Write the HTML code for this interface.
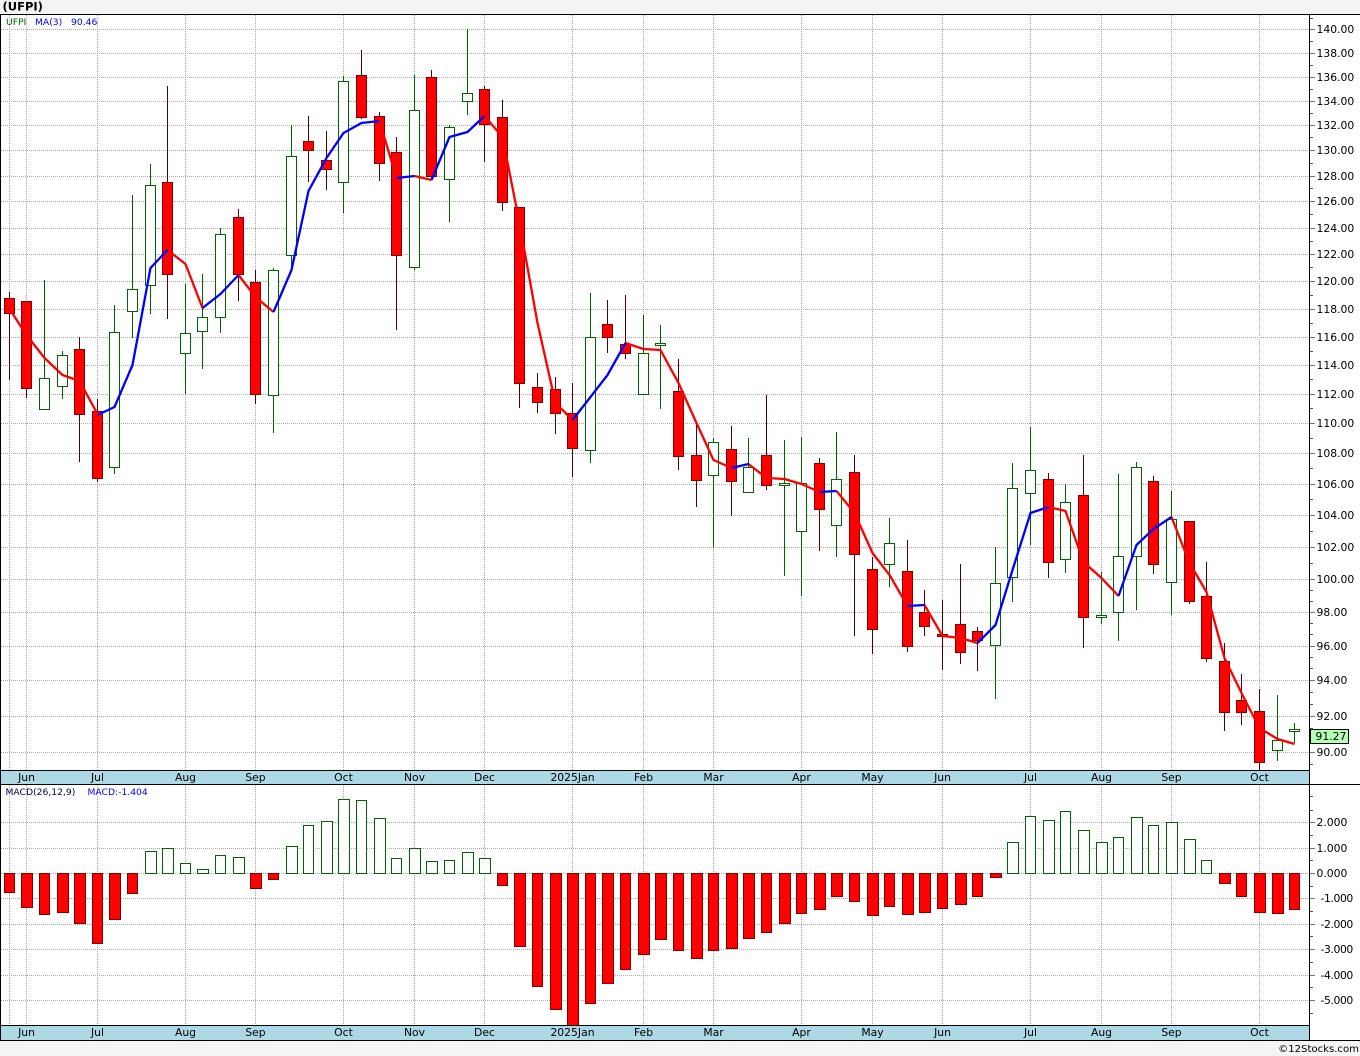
<!DOCTYPE html>
<html lang="en">
<head>
<meta charset="utf-8">
<title>UFPI</title>
<style>
html,body{margin:0;padding:0;background:#f4f4f4;}
body{width:1360px;height:1056px;overflow:hidden;}
svg{display:block;}
text{font-family:"DejaVu Sans","Liberation Sans",sans-serif;font-size:10.8px;fill:#000;}
.m{text-anchor:middle;}
.s{font-size:9.2px;}
</style>
</head>
<body>
<svg width="1360" height="1056" viewBox="0 0 1360 1056" xmlns="http://www.w3.org/2000/svg">
<rect x="0" y="0" width="1360" height="1056" fill="#f4f4f4"/>
<rect x="0" y="14" width="1360" height="1027" fill="#fff"/>

<!-- grid -->
<g fill="none" stroke="#aaa" stroke-width="1" stroke-dasharray="1 1" shape-rendering="crispEdges">
<path d="M1 29.5H1309M1 53.5H1309M1 77.5H1309M1 101.5H1309M1 125.5H1309M1 150.5H1309M1 176.5H1309M1 201.5H1309M1 228.5H1309M1 254.5H1309M1 281.5H1309M1 309.5H1309M1 337.5H1309M1 365.5H1309M1 394.5H1309M1 423.5H1309M1 453.5H1309M1 484.5H1309M1 515.5H1309M1 547.5H1309M1 579.5H1309M1 612.5H1309M1 646.5H1309M1 680.5H1309M1 716.5H1309M1 752.5H1309"/>
<path d="M1 822.5H1309M1 848.5H1309M1 873.5H1309M1 898.5H1309M1 924.5H1309M1 949.5H1309M1 975.5H1309M1 1000.5H1309"/>
<path d="M9.5 15V770M26.5 15V770M97.5 15V770M185.5 15V770M255.5 15V770M343.5 15V770M414.5 15V770M484.5 15V770M572.5 15V770M643.5 15V770M713.5 15V770M801.5 15V770M872.5 15V770M942.5 15V770M1030.5 15V770M1101.5 15V770M1171.5 15V770M1259.5 15V770"/>
<path d="M9.5 785V1025M26.5 785V1025M97.5 785V1025M185.5 785V1025M255.5 785V1025M343.5 785V1025M414.5 785V1025M484.5 785V1025M572.5 785V1025M643.5 785V1025M713.5 785V1025M801.5 785V1025M872.5 785V1025M942.5 785V1025M1030.5 785V1025M1101.5 785V1025M1171.5 785V1025M1259.5 785V1025"/>
</g>

<!-- wicks -->
<path fill="none" stroke="#006400" stroke-width="1" shape-rendering="crispEdges" d="M44.5 280V410M62.5 351V399M114.5 305V474M132.5 195V338M150.5 164V314M185.5 284V394M202.5 274V369M220.5 228V333M273.5 268V433M291.5 125V268M343.5 76V213M414.5 75V270M449.5 125V222M467.5 29V115M590.5 293V463M643.5 315V394M660.5 325V409M713.5 438V548M748.5 438V493M784.5 440V576M801.5 437V596M836.5 432V557M889.5 518V587M995.5 547V699M1012.5 463V602M1030.5 427V545M1065.5 484V573M1101.5 572V624M1118.5 474V641M1136.5 462V610M1171.5 491V615M1277.5 695V761M1294.5 723V743"/>
<path fill="none" stroke="#550000" stroke-width="1" shape-rendering="crispEdges" d="M9.5 292V380M26.5 301V398M79.5 337V462M97.5 399V482M167.5 86V319M238.5 209V301M255.5 270V404M308.5 116V182M326.5 131V190M361.5 50V119M379.5 112V181M396.5 137V330M431.5 70V178M484.5 86V162M502.5 100V211M519.5 207V408M537.5 373V413M555.5 377V434M572.5 383V477M607.5 300V353M625.5 295V359M678.5 359V470M696.5 423V507M731.5 426V516M766.5 395V490M819.5 458V551M854.5 455V636M872.5 557V654M907.5 540V652M924.5 590V636M942.5 600V670M960.5 564V664M977.5 627V671M1048.5 473V578M1083.5 455V648M1153.5 476V574M1189.5 521V604M1206.5 562V662M1224.5 643V731M1241.5 674V725M1259.5 689V770"/>

<!-- bodies -->
<path fill="#fff" stroke="#006400" stroke-width="1" shape-rendering="crispEdges" d="M39.5 378.5h10v31h-10zM57.5 355.5h10v31h-10zM109.5 332.5h10v135h-10zM127.5 289.5h10v22h-10zM145.5 185.5h10v100h-10zM180.5 333.5h10v20h-10zM197.5 317.5h10v14h-10zM215.5 234.5h10v83h-10zM268.5 270.5h10v125h-10zM286.5 156.5h10v99h-10zM338.5 81.5h10v101h-10zM409.5 110.5h10v157h-10zM444.5 127.5h10v52h-10zM462.5 93.5h10v8h-10zM585.5 337.5h10v113h-10zM638.5 353.5h10v41h-10zM655.5 343.5h10v2h-10zM708.5 442.5h10v33h-10zM743.5 467.5h10v25h-10zM779.5 483.5h10v2h-10zM796.5 483.5h10v48h-10zM831.5 479.5h10v46h-10zM884.5 543.5h10v21h-10zM990.5 583.5h10v62h-10zM1007.5 488.5h10v89h-10zM1025.5 470.5h10v23h-10zM1060.5 502.5h10v57h-10zM1096.5 615.5h10v2h-10zM1113.5 556.5h10v56h-10zM1131.5 467.5h10v89h-10zM1166.5 519.5h10v63h-10zM1272.5 740.5h10v10h-10zM1289.5 729.5h10v2h-10z"/>
<path fill="#f00" stroke="#800000" stroke-width="1" shape-rendering="crispEdges" d="M4.5 298.5h10v15h-10zM21.5 301.5h10v87h-10zM74.5 349.5h10v65h-10zM92.5 411.5h10v67h-10zM162.5 182.5h10v92h-10zM233.5 217.5h10v57h-10zM250.5 282.5h10v112h-10zM303.5 141.5h10v9h-10zM321.5 160.5h10v9h-10zM356.5 75.5h10v42h-10zM374.5 116.5h10v47h-10zM391.5 152.5h10v103h-10zM426.5 77.5h10v99h-10zM479.5 89.5h10v35h-10zM497.5 117.5h10v85h-10zM514.5 207.5h10v176h-10zM532.5 387.5h10v15h-10zM550.5 389.5h10v24h-10zM567.5 413.5h10v35h-10zM602.5 324.5h10v13h-10zM620.5 344.5h10v9h-10zM673.5 391.5h10v65h-10zM691.5 455.5h10v25h-10zM726.5 449.5h10v32h-10zM761.5 455.5h10v30h-10zM814.5 463.5h10v46h-10zM849.5 472.5h10v82h-10zM867.5 569.5h10v60h-10zM902.5 571.5h10v75h-10zM919.5 612.5h10v14h-10zM937.5 634.5h10v2h-10zM955.5 624.5h10v28h-10zM972.5 631.5h10v9h-10zM1043.5 479.5h10v83h-10zM1078.5 495.5h10v122h-10zM1148.5 481.5h10v83h-10zM1184.5 521.5h10v80h-10zM1201.5 596.5h10v62h-10zM1219.5 661.5h10v51h-10zM1236.5 700.5h10v12h-10zM1254.5 711.5h10v51h-10z"/>

<!-- moving average -->
<g fill="none" stroke-width="2.3" stroke-linejoin="round">
<g stroke="#f00">
<polyline points="9.5,309 26.5,335 44.5,358 62.5,375 79.5,381 97.5,414"/>
<polyline points="167.5,250 185.5,264 202.5,308"/>
<polyline points="238.5,275 255.5,297 273.5,312"/>
<polyline points="379.5,121 396.5,178"/>
<polyline points="414.5,176 431.5,180"/>
<polyline points="484.5,116 502.5,137 519.5,223 537.5,323 555.5,403 572.5,420"/>
<polyline points="625.5,343 643.5,349 660.5,350 678.5,383 696.5,423 713.5,460 731.5,468"/>
<polyline points="748.5,464 766.5,478 784.5,479 801.5,484 819.5,492"/>
<polyline points="836.5,491 854.5,513 872.5,553 889.5,575 907.5,606"/>
<polyline points="924.5,605 942.5,636 960.5,638 977.5,643"/>
<polyline points="1048.5,507 1065.5,511 1083.5,562 1101.5,578 1118.5,596"/>
<polyline points="1171.5,517 1189.5,563 1206.5,592 1224.5,658 1241.5,693 1259.5,728 1277.5,739 1294.5,744"/>
</g>
<g stroke="#00f">
<polyline points="97.5,415 114.5,407 132.5,365 150.5,268 167.5,250"/>
<polyline points="202.5,308 220.5,294 238.5,275"/>
<polyline points="273.5,312 291.5,270 308.5,191 326.5,158 343.5,133 361.5,123 379.5,121"/>
<polyline points="396.5,178 414.5,176"/>
<polyline points="431.5,180 449.5,137 467.5,132 484.5,116"/>
<polyline points="572.5,420 590.5,397 607.5,375 625.5,343"/>
<polyline points="731.5,468 748.5,464"/>
<polyline points="819.5,492 836.5,491"/>
<polyline points="907.5,606 924.5,605"/>
<polyline points="977.5,643 995.5,625 1012.5,570 1030.5,513 1048.5,507"/>
<polyline points="1118.5,596 1136.5,545 1153.5,529 1171.5,517"/>
</g>
</g>

<!-- MACD bars -->
<path fill="#f00" stroke="#800000" stroke-width="1" shape-rendering="crispEdges" d="M4.5 873.5h10V892.5h-10zM21.5 873.5h11V907.5h-11zM39.5 873.5h10V914.5h-10zM57.5 873.5h11V912.5h-11zM74.5 873.5h11V923.5h-11zM92.5 873.5h10V943.5h-10zM109.5 873.5h11V919.5h-11zM127.5 873.5h10V893.5h-10zM250.5 873.5h11V888.5h-11zM268.5 873.5h10V879.5h-10zM497.5 873.5h10V885.5h-10zM514.5 873.5h11V946.5h-11zM532.5 873.5h10V986.5h-10zM550.5 873.5h11V1009.5h-11zM567.5 873.5h11V1025.5h-11zM585.5 873.5h10V1003.5h-10zM602.5 873.5h11V983.5h-11zM620.5 873.5h10V969.5h-10zM638.5 873.5h11V954.5h-11zM655.5 873.5h11V939.5h-11zM673.5 873.5h10V950.5h-10zM691.5 873.5h11V958.5h-11zM708.5 873.5h10V950.5h-10zM726.5 873.5h11V948.5h-11zM743.5 873.5h11V938.5h-11zM761.5 873.5h10V932.5h-10zM779.5 873.5h11V923.5h-11zM796.5 873.5h10V913.5h-10zM814.5 873.5h11V909.5h-11zM831.5 873.5h11V896.5h-11zM849.5 873.5h10V901.5h-10zM867.5 873.5h11V915.5h-11zM884.5 873.5h10V906.5h-10zM902.5 873.5h11V914.5h-11zM919.5 873.5h11V912.5h-11zM937.5 873.5h10V908.5h-10zM955.5 873.5h11V904.5h-11zM972.5 873.5h10V896.5h-10zM990.5 873.5h11V877.5h-11zM1219.5 873.5h11V883.5h-11zM1236.5 873.5h10V896.5h-10zM1254.5 873.5h11V912.5h-11zM1272.5 873.5h11V913.5h-11zM1289.5 873.5h10V909.5h-10z"/>
<path fill="#fff" stroke="#006400" stroke-width="1" shape-rendering="crispEdges" d="M145.5 851.5h11V873.5h-11zM162.5 848.5h11V873.5h-11zM180.5 863.5h10V873.5h-10zM197.5 869.5h11V873.5h-11zM215.5 855.5h10V873.5h-10zM233.5 857.5h11V873.5h-11zM286.5 846.5h11V873.5h-11zM303.5 825.5h10V873.5h-10zM321.5 821.5h11V873.5h-11zM338.5 799.5h11V873.5h-11zM356.5 800.5h10V873.5h-10zM374.5 818.5h11V873.5h-11zM391.5 858.5h10V873.5h-10zM409.5 848.5h11V873.5h-11zM426.5 861.5h11V873.5h-11zM444.5 860.5h10V873.5h-10zM462.5 852.5h11V873.5h-11zM479.5 858.5h11V873.5h-11zM1007.5 842.5h11V873.5h-11zM1025.5 816.5h10V873.5h-10zM1043.5 820.5h11V873.5h-11zM1060.5 811.5h10V873.5h-10zM1078.5 830.5h11V873.5h-11zM1096.5 842.5h11V873.5h-11zM1113.5 837.5h10V873.5h-10zM1131.5 817.5h11V873.5h-11zM1148.5 825.5h10V873.5h-10zM1166.5 822.5h11V873.5h-11zM1184.5 839.5h11V873.5h-11zM1201.5 860.5h10V873.5h-10z"/>

<!-- date strips -->
<rect x="1" y="770" width="1308" height="15" fill="#add8e6"/>
<rect x="1" y="1025" width="1308" height="16" fill="#add8e6"/>

<!-- axis ticks -->
<path fill="none" stroke="#777" stroke-width="1" shape-rendering="crispEdges" d="M1309 29.5h6M1309 53.5h6M1309 77.5h6M1309 101.5h6M1309 125.5h6M1309 150.5h6M1309 176.5h6M1309 201.5h6M1309 228.5h6M1309 254.5h6M1309 281.5h6M1309 309.5h6M1309 337.5h6M1309 365.5h6M1309 394.5h6M1309 423.5h6M1309 453.5h6M1309 484.5h6M1309 515.5h6M1309 547.5h6M1309 579.5h6M1309 612.5h6M1309 646.5h6M1309 680.5h6M1309 716.5h6M1309 752.5h6M1309 822.5h6M1309 848.5h6M1309 873.5h6M1309 898.5h6M1309 924.5h6M1309 949.5h6M1309 975.5h6M1309 1000.5h6"/>
<path fill="none" stroke="#555" stroke-width="1" shape-rendering="crispEdges" d="M1309 18.5h4M1309 41.5h4M1309 65.5h4M1309 89.5h4M1309 113.5h4M1309 137.5h4M1309 163.5h4M1309 188.5h4M1309 214.5h4M1309 241.5h4M1309 267.5h4M1309 295.5h4M1309 323.5h4M1309 351.5h4M1309 379.5h4M1309 408.5h4M1309 438.5h4M1309 468.5h4M1309 499.5h4M1309 531.5h4M1309 563.5h4M1309 590.5h4M1309 601.5h4M1309 623.5h4M1309 634.5h4M1309 657.5h4M1309 668.5h4M1309 692.5h4M1309 704.5h4M1309 728.5h4M1309 740.5h4M1309 764.5h4M1309 796.5h4M1309 810.5h4M1309 835.5h4M1309 860.5h4M1309 886.5h4M1309 911.5h4M1309 936.5h4M1309 962.5h4M1309 987.5h4M1309 1013.5h4"/>

<!-- frame -->
<g fill="#000" shape-rendering="crispEdges">
<rect x="0" y="14" width="1360" height="1"/>
<rect x="0" y="14" width="1" height="1027"/>
<rect x="1309" y="14" width="1" height="1027"/>
<rect x="0" y="770" width="1309" height="1"/>
<rect x="0" y="784" width="1360" height="1"/>
<rect x="0" y="1025" width="1309" height="1"/>
<rect x="0" y="1040" width="1360" height="1"/>
</g>

<!-- title and legends -->
<text x="2.5" y="10.5" style="font-weight:bold;font-size:11.5px">(UFPI)</text>
<text x="6" y="25" class="s" style="fill:#006400">UFPI</text>
<text x="35" y="25" class="s" style="fill:#00f">MA(3)</text>
<text x="71" y="25" class="s" style="fill:#00f">90.46</text>
<text x="5.5" y="795" class="s" style="fill:#000050">MACD(26,12,9)</text>
<text x="87.5" y="795" class="s" style="fill:#00f">MACD:-1.404</text>

<!-- price axis labels -->
<text x="1316.5" y="33">140.00</text>
<text x="1316.5" y="57">138.00</text>
<text x="1316.5" y="81">136.00</text>
<text x="1316.5" y="105">134.00</text>
<text x="1316.5" y="129">132.00</text>
<text x="1316.5" y="154">130.00</text>
<text x="1316.5" y="180">128.00</text>
<text x="1316.5" y="205">126.00</text>
<text x="1316.5" y="232">124.00</text>
<text x="1316.5" y="258">122.00</text>
<text x="1316.5" y="285">120.00</text>
<text x="1316.5" y="313">118.00</text>
<text x="1316.5" y="341">116.00</text>
<text x="1316.5" y="369">114.00</text>
<text x="1316.5" y="398">112.00</text>
<text x="1316.5" y="427">110.00</text>
<text x="1316.5" y="457">108.00</text>
<text x="1316.5" y="488">106.00</text>
<text x="1316.5" y="519">104.00</text>
<text x="1316.5" y="551">102.00</text>
<text x="1316.5" y="583">100.00</text>
<text x="1316.5" y="616">98.00</text>
<text x="1316.5" y="650">96.00</text>
<text x="1316.5" y="684">94.00</text>
<text x="1316.5" y="720">92.00</text>
<text x="1316.5" y="756">90.00</text>

<rect x="1310.5" y="729.5" width="38" height="14" fill="#b4ffb4" stroke="#000" stroke-width="1" shape-rendering="crispEdges"/>
<text x="1315.5" y="740">91.27</text>

<!-- MACD axis labels -->
<text x="1316.5" y="826">2.000</text>
<text x="1316.5" y="852">1.000</text>
<text x="1316.5" y="877">0.000</text>
<text x="1320.5" y="902" style="letter-spacing:-.4px">-1.000</text>
<text x="1320.5" y="928" style="letter-spacing:-.4px">-2.000</text>
<text x="1320.5" y="953" style="letter-spacing:-.4px">-3.000</text>
<text x="1320.5" y="979" style="letter-spacing:-.4px">-4.000</text>
<text x="1320.5" y="1004" style="letter-spacing:-.4px">-5.000</text>

<!-- month labels -->
<g class="m">
<text class="m" x="26.5" y="781">Jun</text>
<text class="m" x="97.5" y="781">Jul</text>
<text class="m" x="185.5" y="781">Aug</text>
<text class="m" x="255.5" y="781">Sep</text>
<text class="m" x="343.5" y="781">Oct</text>
<text class="m" x="414.5" y="781">Nov</text>
<text class="m" x="484.5" y="781">Dec</text>
<text class="m" x="572.5" y="781">2025Jan</text>
<text class="m" x="643.5" y="781">Feb</text>
<text class="m" x="713.5" y="781">Mar</text>
<text class="m" x="801.5" y="781">Apr</text>
<text class="m" x="872.5" y="781">May</text>
<text class="m" x="942.5" y="781">Jun</text>
<text class="m" x="1030.5" y="781">Jul</text>
<text class="m" x="1101.5" y="781">Aug</text>
<text class="m" x="1171.5" y="781">Sep</text>
<text class="m" x="1259.5" y="781">Oct</text>

<text class="m" x="26.5" y="1036">Jun</text>
<text class="m" x="97.5" y="1036">Jul</text>
<text class="m" x="185.5" y="1036">Aug</text>
<text class="m" x="255.5" y="1036">Sep</text>
<text class="m" x="343.5" y="1036">Oct</text>
<text class="m" x="414.5" y="1036">Nov</text>
<text class="m" x="484.5" y="1036">Dec</text>
<text class="m" x="572.5" y="1036">2025Jan</text>
<text class="m" x="643.5" y="1036">Feb</text>
<text class="m" x="713.5" y="1036">Mar</text>
<text class="m" x="801.5" y="1036">Apr</text>
<text class="m" x="872.5" y="1036">May</text>
<text class="m" x="942.5" y="1036">Jun</text>
<text class="m" x="1030.5" y="1036">Jul</text>
<text class="m" x="1101.5" y="1036">Aug</text>
<text class="m" x="1171.5" y="1036">Sep</text>
<text class="m" x="1259.5" y="1036">Oct</text>
</g>

<text x="1359" y="1052" style="text-anchor:end;font-size:10.1px">©12Stocks.com</text>
</svg>
</body>
</html>
